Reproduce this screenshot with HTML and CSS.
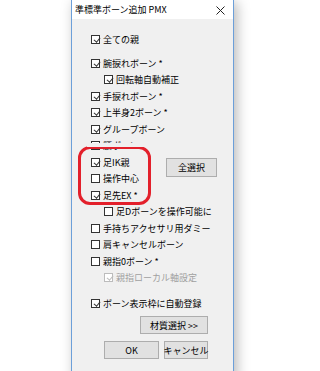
FILE: index.html
```html
<html>
  <head>
    <title>準標準ボーン追加 PMX</title>
    <meta name="viewport" content="width=device-width, initial-scale=1" />
    <link rel="stylesheet" href="styles.css">
  </head>
  <body>
    <div class="window">
      <div class="titlebar">
        <span class="title">準標準ボーン追加 PMX</span>
        <svg class="close" width="9" height="9" viewBox="0 0 9 9">
          <path d="M0.5 0.5 L8.5 8.5 M8.5 0.5 L0.5 8.5" stroke="#222" stroke-width="1" fill="none"/>
        </svg>
      </div>
      <div class="client">
        <label class="row"><span class="box checked"></span>全ての親</label>
        <label class="row spaced"><span class="box checked"></span>腕捩れボーン *</label>
        <label class="row indent"><span class="box checked"></span>回転軸自動補正</label>
        <label class="row"><span class="box checked"></span>手捩れボーン *</label>
        <label class="row"><span class="box checked"></span>上半身2ボーン *</label>
        <label class="row"><span class="box checked"></span>グループボーン</label>
        <label class="row"><span class="box"></span>腰ボーン</label>
        <div class="group">
          <div class="col">
            <label class="row"><span class="box checked"></span>足IK親</label>
            <label class="row"><span class="box"></span>操作中心</label>
            <label class="row"><span class="box checked"></span>足先EX *</label>
          </div>
          <button class="btn select-all" type="button">全選択</button>
          <div class="mark"></div>
        </div>
        <label class="row indent"><span class="box"></span>足Dボーンを操作可能に</label>
        <label class="row"><span class="box"></span>手持ちアクセサリ用ダミー</label>
        <label class="row"><span class="box"></span>肩キャンセルボーン</label>
        <label class="row"><span class="box"></span>親指0ボーン *</label>
        <label class="row indent disabled"><span class="box checked"></span>親指ローカル軸設定</label>
        <label class="row spaced-lg"><span class="box checked"></span>ボーン表示枠に自動登録</label>
        <div class="footer">
          <button class="btn material" type="button">材質選択 &gt;&gt;</button>
          <div class="actions">
            <button class="btn ok" type="button">OK</button>
            <button class="btn cancel" type="button">キャンセル</button>
          </div>
        </div>
      </div>
    </div>
  </body>
</html>
```

FILE: styles.css
```css
body {
  margin: 0;
  background: #fff;
  font-family: "Noto Sans CJK JP", "DejaVu Sans", sans-serif;
  font-size: 9px;
  color: #000;
  overflow: hidden;
}

.window {
  margin-left: 71px;
  width: 163px;
  min-height: 380px;
  box-sizing: border-box;
  border-left: 1px solid #6c9fd9;
  border-right: 1px solid #6c9fd9;
  background: #f0f0f0;
  box-shadow: 3px 2px 12px rgba(0, 0, 0, 0.28);
}

.titlebar {
  height: 19px;
  background: #fff;
  display: flex;
  align-items: center;
  padding: 0 8px 0 3px;
}

.titlebar .title {
  flex: 1;
  white-space: nowrap;
}

.titlebar .close {
  margin-top: 1px;
}

.client {
  padding: 12px 0 20px 19px;
}

.row {
  display: flex;
  align-items: center;
  gap: 3px;
  height: 16.5px;
  white-space: nowrap;
}

.row.spaced {
  margin-top: 7.5px;
}

.row.spaced-lg {
  margin-top: 9.5px;
}

.row.indent {
  padding-left: 13px;
}

.box {
  width: 9px;
  height: 9px;
  box-sizing: border-box;
  border: 1px solid #333;
  background: #fff;
  flex: none;
  position: relative;
}

.box.checked::after {
  content: "";
  position: absolute;
  left: 1px;
  top: 0px;
  width: 5px;
  height: 2.5px;
  border-left: 1px solid #333;
  border-bottom: 1px solid #333;
  transform: rotate(-50deg) translate(-0.5px, 1.5px);
}

.row.disabled {
  color: #a0a0a0;
}

.row.disabled .box {
  border-color: #bcbcbc;
}

.row.disabled .box.checked::after {
  border-color: #bcbcbc;
}

.group {
  display: flex;
  position: relative;
}

.btn {
  font: inherit;
  color: #000;
  background: #e1e1e1;
  border: 1px solid #adadad;
  border-radius: 0;
  padding: 0;
  height: 18px;
  display: flex;
  align-items: center;
  justify-content: center;
  white-space: nowrap;
}

.btn.select-all {
  margin-left: auto;
  margin-right: 16px;
  margin-top: 3.75px;
  width: 51px;
  height: 19px;
}

.mark {
  position: absolute;
  left: -13px;
  top: -8.25px;
  width: 73px;
  height: 59px;
  box-sizing: border-box;
  border: 3px solid #e3202b;
  border-radius: 12px;
}

.mark::before {
  content: "";
  position: absolute;
  left: 6px;
  right: -8px;
  top: -6px;
  height: 4px;
  background: #f0f0f0;
}

.footer {
  display: flex;
  flex-direction: column;
  align-items: flex-end;
  margin-right: 25px;
}

.btn.material {
  margin-top: 4.25px;
  width: 68px;
}

.actions {
  display: flex;
  gap: 5px;
  margin-top: 7px;
}

.btn.ok {
  width: 55px;
}

.btn.cancel {
  width: 44px;
}
```
